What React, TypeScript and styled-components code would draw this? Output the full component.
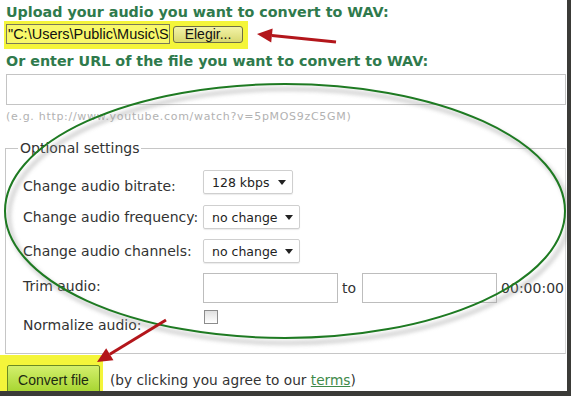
import styled, { createGlobalStyle } from "styled-components";

const Global = createGlobalStyle`
  html, body {
    margin: 0;
    padding: 0;
    background: #fff;
    overflow: hidden;
  }
  body {
    font-family: "DejaVu Sans", Verdana, sans-serif;
  }
`;

const Frame = styled.div`
  position: relative;
  width: 571px;
  height: 396px;
  box-sizing: border-box;
  border-right: 4px solid #3b3b38;
  border-bottom: 5px solid #3b3b38;
  overflow: hidden;
  background: #fff;
`;

const Page = styled.div`
  display: flex;
  flex-direction: column;
  padding: 4px 0 0 5px;
`;

const Heading = styled.h2<{ $mt: number }>`
  margin: ${(p) => p.$mt}px 0 0 1px;
  font-size: 14.3px;
  line-height: 17px;
  font-weight: bold;
  color: #2f7a4c;
  white-space: nowrap;
`;

const Highlight = styled.div<{ $pad: string; $ml: number }>`
  display: flex;
  align-items: center;
  gap: 3px;
  align-self: flex-start;
  margin-left: ${(p) => p.$ml}px;
  background: #f4f53a;
  padding: ${(p) => p.$pad};
`;

const FileBox = styled.div`
  box-sizing: border-box;
  width: 164px;
  height: 20px;
  border: 1px solid #7a7a5a;
  background: #f8f86a;
  font-family: "Liberation Sans", Arial, sans-serif;
  font-size: 14.5px;
  line-height: 18px;
  overflow: hidden;
  white-space: nowrap;
  color: #111;
  padding-left: 1px;
`;

const SmallButton = styled.button`
  height: 17px;
  width: 70px;
  padding: 0;
  border: 1px solid #6f6f45;
  border-radius: 3px;
  background: linear-gradient(#f3f3a8, #d8d870);
  font-family: "Liberation Sans", Arial, sans-serif;
  font-size: 14px;
  line-height: 15px;
  color: #111;
`;

const UrlInput = styled.input`
  box-sizing: border-box;
  width: 560px;
  height: 31px;
  margin: 4px 0 0 1px;
  border: 1px solid #c4c4c4;
  background: #fff;
`;

const Hint = styled.div`
  margin: 5px 0 0 1px;
  font-size: 11px;
  line-height: 13px;
  color: #b2b2b2;
  letter-spacing: 0.7px;
  white-space: nowrap;
`;

const Fieldset = styled.fieldset`
  margin: 17px 0 0 0;
  width: 561px;
  box-sizing: border-box;
  height: 214px;
  padding: 13px 0 0 17px;
  border: 1px solid #c6c6c6;
  border-right-color: #d8d8d8;
`;

const Legend = styled.legend`
  margin-left: -5px;
  padding: 0 2px;
  font-size: 14px;
  line-height: 17px;
  color: #333;
`;

const Grid = styled.div`
  display: grid;
  grid-template-columns: 180px auto;
  align-items: start;
  row-gap: 10px;
`;

const Label = styled.div<{ $mt: number }>`
  margin-top: ${(p) => p.$mt}px;
  font-size: 14px;
  line-height: 17px;
  color: #333;
  white-space: nowrap;
`;

const SelectBox = styled.div<{ $w: number }>`
  box-sizing: border-box;
  width: ${(p) => p.$w}px;
  height: 24px;
  display: flex;
  align-items: center;
  justify-content: space-between;
  padding: 0 6px 0 8px;
  border: 1px solid #cfcfcf;
  border-radius: 2px;
  box-shadow: 0 1px 1px rgba(0, 0, 0, 0.08);
  font-size: 12.5px;
  color: #222;
`;

const Caret = styled.span`
  width: 0;
  height: 0;
  border-left: 4px solid transparent;
  border-right: 4px solid transparent;
  border-top: 5px solid #222;
`;

const Inline = styled.div`
  display: flex;
  align-items: center;
  gap: 4px;
  white-space: nowrap;
`;

const TrimInput = styled.input`
  box-sizing: border-box;
  width: 135px;
  height: 30px;
  margin: 0;
  border: 1px solid #bdbdbd;
  background: #fff;
`;

const Plain = styled.span<{ $mr: number }>`
  margin-right: ${(p) => p.$mr}px;
  font-size: 14px;
  color: #333;
`;

const Check = styled.span`
  display: block;
  margin: -3px 0 0 1px;
  box-sizing: border-box;
  width: 14px;
  height: 14px;
  border: 1px solid #8c8c8c;
  background: linear-gradient(#e0e0e0, #fff);
`;

const Footer = styled.div`
  display: flex;
  align-items: flex-start;
  gap: 7px;
  margin: 1px 0 0 0;
`;

const ConvertButton = styled.button`
  height: 30px;
  width: 93px;
  padding: 0;
  border: 1px solid #6b8a23;
  border-radius: 2px;
  background: linear-gradient(#d3ef6c, #a3d32c);
  font-family: "Liberation Sans", Arial, sans-serif;
  font-size: 14px;
  color: #1c2a12;
`;

const Note = styled.span`
  margin-top: 17px;
  font-size: 13.7px;
  line-height: 16px;
  color: #333;
  white-space: nowrap;
`;

const TermsLink = styled.a`
  color: #3f8a4a;
  text-decoration: underline;
`;

const Overlay = styled.svg`
  position: absolute;
  left: 0;
  top: 0;
  pointer-events: none;
`;

const Arrow = ({ x1, y1, x2, y2 }: { x1: number; y1: number; x2: number; y2: number }) => {
  const a = Math.atan2(y2 - y1, x2 - x1);
  const len = 15;
  const half = 7;
  const bx = x2 - Math.cos(a) * len;
  const by = y2 - Math.sin(a) * len;
  const px = -Math.sin(a) * half;
  const py = Math.cos(a) * half;
  return (
    <g>
      <line x1={x1} y1={y1} x2={bx} y2={by} stroke="#b3161b" strokeWidth={3} />
      <polygon
        points={`${x2},${y2} ${bx + px},${by + py} ${bx - px},${by - py}`}
        fill="#b3161b"
      />
    </g>
  );
};

export default function App() {
  return (
    <Frame>
      <Global />
      <Page>
        <Heading $mt={0}>Upload your audio you want to convert to WAV:</Heading>
        <Highlight $pad="3px 5px 5px 2px" $ml={-1}>
          <FileBox>"C:\Users\Public\Music\Sample Music\song.mp3"</FileBox>
          <SmallButton>Elegir...</SmallButton>
        </Highlight>
        <Heading $mt={4}>Or enter URL of the file you want to convert to WAV:</Heading>
        <UrlInput />
        <Hint>(e.g. http://www.youtube.com/watch?v=5pMOS9zC5GM)</Hint>
        <Fieldset>
          <Legend>Optional settings</Legend>
          <Grid>
            <Label $mt={8}>Change audio bitrate:</Label>
            <SelectBox $w={90}>
              128 kbps <Caret />
            </SelectBox>
            <Label $mt={4}>Change audio frequency:</Label>
            <SelectBox $w={97}>
              no change <Caret />
            </SelectBox>
            <Label $mt={4}>Change audio channels:</Label>
            <SelectBox $w={97}>
              no change <Caret />
            </SelectBox>
            <Label $mt={5}>Trim audio:</Label>
            <Inline>
              <TrimInput />
              <Plain $mr={2}>to</Plain>
              <TrimInput />
              <Plain $mr={0}>00:00:00</Plain>
            </Inline>
            <Label $mt={4}>Normalize audio:</Label>
            <Check />
          </Grid>
        </Fieldset>
        <Footer>
          <Highlight $pad="10px 3px 0 7px" $ml={-5}>
            <ConvertButton>Convert file</ConvertButton>
          </Highlight>
          <Note>
            (by clicking you agree to our <TermsLink href="#">terms</TermsLink>)
          </Note>
        </Footer>
      </Page>
      <Overlay width={571} height={396} viewBox="0 0 571 396">
        <defs>
          <filter id="soft" x="-10%" y="-10%" width="120%" height="120%">
            <feGaussianBlur stdDeviation="2" />
          </filter>
        </defs>
        <ellipse
          cx={289}
          cy={216}
          rx={280}
          ry={127}
          fill="none"
          stroke="#9a9a9a"
          strokeWidth={3}
          opacity={0.6}
          filter="url(#soft)"
        />
        <ellipse cx={285} cy={211} rx={280} ry={127} fill="none" stroke="#1e7a22" strokeWidth={2} />
        <Arrow x1={336} y1={42} x2={257} y2={34} />
        <Arrow x1={166} y1={320} x2={97} y2={362} />
      </Overlay>
    </Frame>
  );
}
